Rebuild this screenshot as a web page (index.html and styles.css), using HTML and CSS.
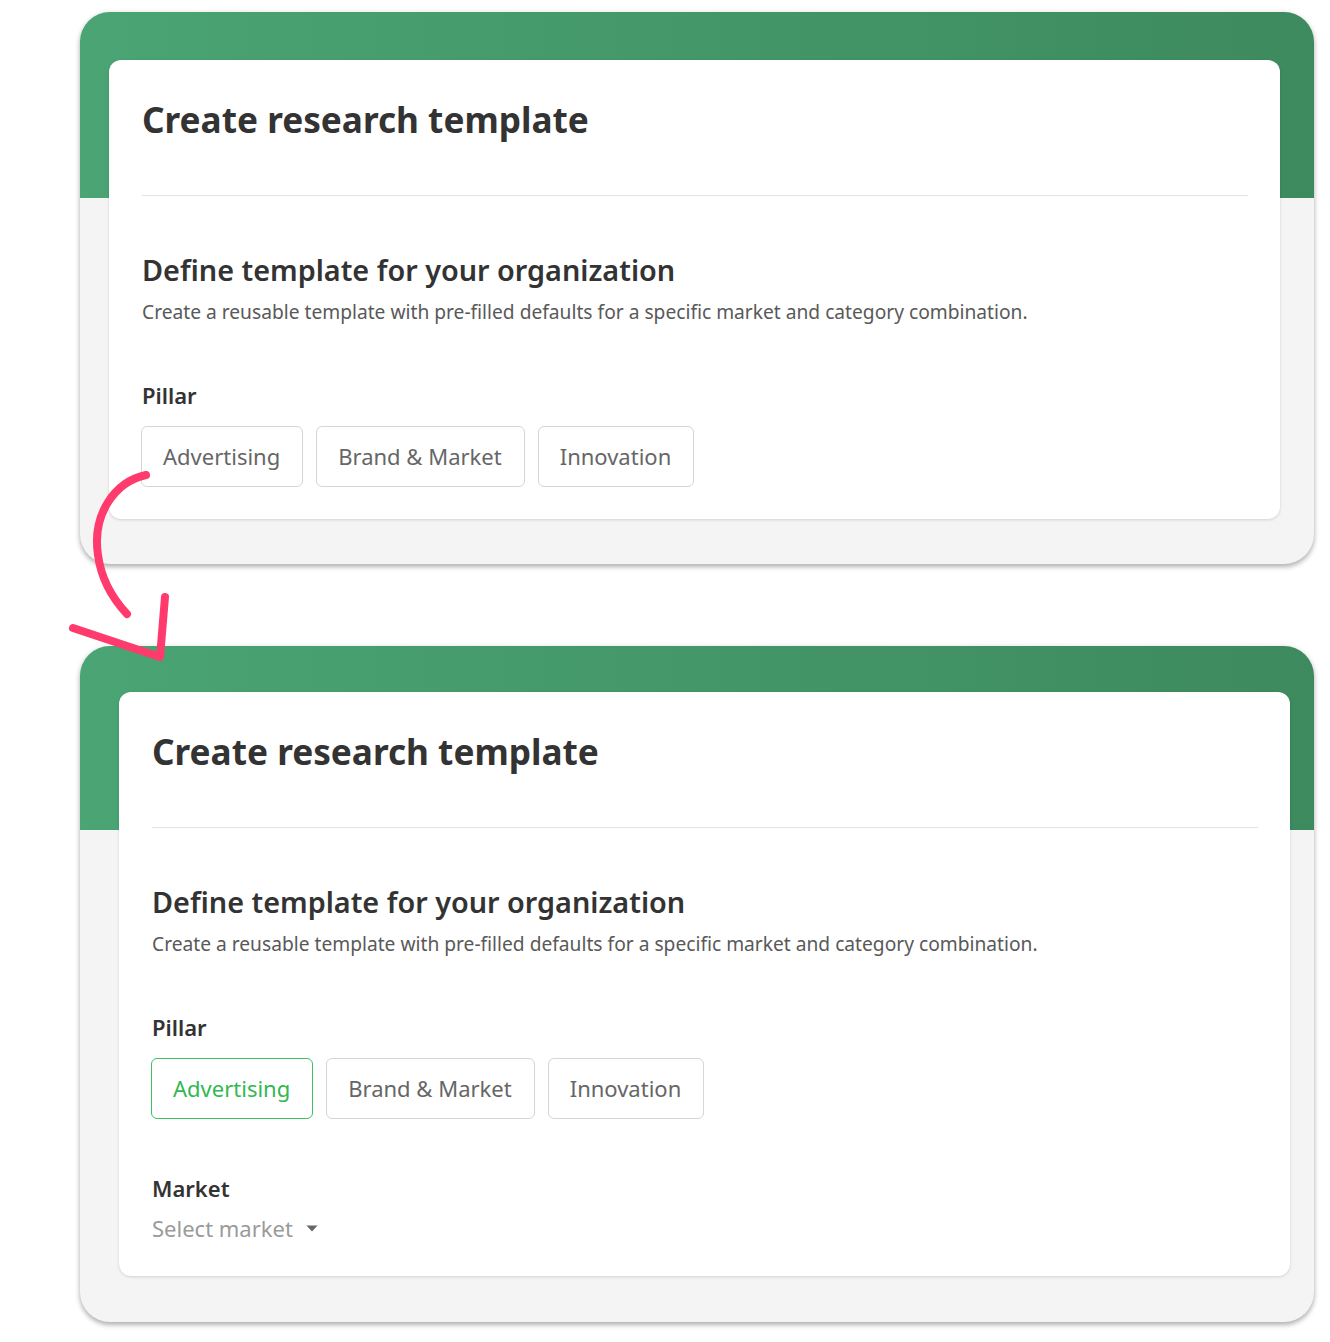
FILE: index.html
```html
<!DOCTYPE html>
<html lang="en">
<head>
  <meta charset="UTF-8" />
  <meta name="viewport" content="width=device-width, initial-scale=1.0" />
  <title>Create research template</title>
  <link rel="stylesheet" href="styles.css">
</head>
<body>
  <main class="page">
    <!-- before: nothing selected -->
    <section class="frame frame-before">
      <div class="card">
        <div class="card-head">
          <h1 class="title">Create research template</h1>
        </div>
        <h2 class="subhead">Define template for your organization</h2>
        <p class="desc">Create a reusable template with pre-filled defaults for a specific market and category combination.</p>
        <div class="field-label">Pillar</div>
        <div class="pills">
          <button class="pill">Advertising</button>
          <button class="pill">Brand &amp; Market</button>
          <button class="pill">Innovation</button>
        </div>
      </div>
    </section>

    <!-- after: Advertising selected, market field shows up -->
    <section class="frame frame-after">
      <div class="card">
        <div class="card-head">
          <h1 class="title">Create research template</h1>
        </div>
        <h2 class="subhead">Define template for your organization</h2>
        <p class="desc">Create a reusable template with pre-filled defaults for a specific market and category combination.</p>
        <div class="field-label">Pillar</div>
        <div class="pills">
          <button class="pill active">Advertising</button>
          <button class="pill">Brand &amp; Market</button>
          <button class="pill">Innovation</button>
        </div>
        <div class="field-label market-label">Market</div>
        <div class="select">
          <span>Select market</span>
          <svg class="caret" width="12" height="7" viewBox="0 0 12 7"><path d="M0.5 0.5 H11.5 L6 6.5 Z" fill="#666"/></svg>
        </div>
      </div>
    </section>
  </main>

  <!-- hand drawn arrow between the two states -->
  <svg class="arrow" width="200" height="220" viewBox="0 0 200 220">
    <g fill="none" stroke="#ff3b6d" stroke-width="8" stroke-linecap="round" stroke-linejoin="round">
      <path d="M86 15 C 54 22, 32 55, 38 95 C 41 118, 52 138, 67 154"/>
      <path d="M13 168 L100 197 L105 137"/>
    </g>
  </svg>
</body>
</html>
```

FILE: styles.css
```css
body {
  margin: 0;
  font-family: "Noto Sans", "Open Sans", Arial, sans-serif;
  background: #fff;
  color: #333;
  position: relative;
}
.page {
  display: flex;
  flex-direction: column;
  gap: 82px;
  padding: 12px 0 20px 80px;
}
/* green band on top, grey below */
.frame {
  width: 1234px;
  box-sizing: border-box;
  border-radius: 30px;
  background:
    linear-gradient(to right, #4aa473, #3d8a5e) top left / 100% 186px no-repeat,
    #f4f4f4;
  box-shadow: 0 3px 5px rgba(0, 0, 0, 0.28), 0 0 6px rgba(0, 0, 0, 0.08);
}
.frame-before {
  padding: 48px 34px 45px 29px;
}
.frame-after {
  padding: 46px 24px 46px 39px;
  background:
    linear-gradient(to right, #4aa473, #3d8a5e) top left / 100% 184px no-repeat,
    #f4f4f4;
}
.card {
  background: #fff;
  border-radius: 12px;
  padding: 35px 32px 32px 33px;
  box-shadow: 0 1px 3px rgba(0, 0, 0, 0.14);
}
.frame-after .card {
  padding-bottom: 33px;
}
.card-head {
  padding-bottom: 52px;
  border-bottom: 1px solid #e3e3e3;
}
.title {
  margin: 0;
  font-size: 35.2px;
  line-height: 48px;
  font-weight: 700;
  color: #333;
}
.subhead {
  margin: 55px 0 0;
  font-size: 28.8px;
  line-height: 38px;
  font-weight: 600;
  color: #333;
}
.desc {
  margin: 10px 0 0;
  font-size: 19.2px;
  line-height: 26px;
  color: #595959;
}
.field-label {
  margin-top: 56px;
  font-size: 22px;
  line-height: 28px;
  font-weight: 600;
  color: #333;
}
.market-label {
  margin-top: 55px;
}
.pills {
  display: flex;
  gap: 13px;
  margin: 17px 0 0 -1px;
}
.pill {
  font-family: inherit;
  font-size: 22px;
  line-height: 29px;
  padding: 15px 22px 15px 21px;
  color: #666;
  background: #fff;
  border: 1px solid #d6d6d6;
  border-radius: 6px;
}
.pill.active {
  color: #32b851;
  border-color: #3cc15d;
}
.select {
  display: flex;
  align-items: center;
  gap: 13px;
  margin-top: 11px;
  font-size: 22px;
  line-height: 30px;
  color: #9a9a9a;
}
.caret {
  display: block;
}
.arrow {
  position: absolute;
  left: 60px;
  top: 460px;
}
```
